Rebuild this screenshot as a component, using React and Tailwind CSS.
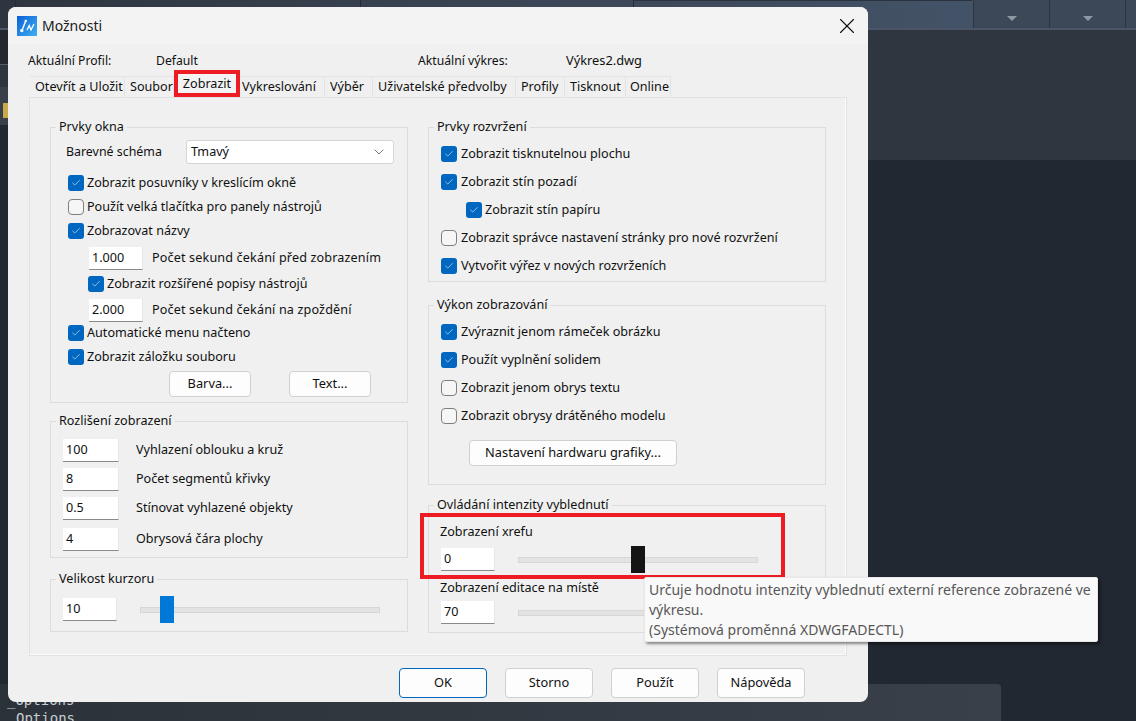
import { X, ChevronDown, Check } from 'lucide-react';

const uiFont = { fontFamily: '"Noto Sans", sans-serif' };

const Group = ({ title, className, children }) => (
    <fieldset className={`border border-[#dcdcdc] ${className}`}>
        <legend className="ml-[5px] px-[3px] h-[18px] leading-[18px] text-[12.6px] text-[#101010]">{title}</legend>
        {children}
    </fieldset>
);

const CheckRow = ({ checked, label, className = '', gap = 'ml-[3px]' }) => (
    <div className={`flex items-center h-[24px] ${className}`}>
        {checked ? (
            <span className="w-[16px] h-[16px] rounded-[3px] bg-[#0067c0] flex items-center justify-center shrink-0">
                <Check size={10} strokeWidth={1.4} color="#fff" />
            </span>
        ) : (
            <span className="w-[16px] h-[16px] rounded-[4px] border border-[#7f7f7f] bg-[#f6f6f6] shrink-0" />
        )}
        <span className={`text-[12.6px] text-[#101010] whitespace-nowrap ${gap}`}>{label}</span>
    </div>
);

const Field = ({ value, className = 'w-[56px]' }) => (
    <div className={`h-[23px] bg-white border-b border-[#8a8a8a] border-r-[#e6e6e6] border-r pl-[3px] text-[12.6px] leading-[21px] text-[#101010] shrink-0 ${className}`}>
        {value}
    </div>
);

const FieldRow = ({ value, label, fieldClass, labelClass, className = '' }) => (
    <div className={`flex items-center ${className}`}>
        <Field value={value} className={fieldClass} />
        <span className={`text-[12.6px] text-[#101010] whitespace-nowrap ${labelClass}`}>{label}</span>
    </div>
);

const Btn = ({ label, className = '', primary }) => (
    <div className={`flex items-center justify-center rounded-[4px] border bg-[#fdfdfd] text-[12.8px] text-[#101010] ${primary ? 'border-[#0067c0]' : 'border-[#d0d0d0]'} ${className}`}>
        {label}
    </div>
);

const Slider = ({ thumbLeft, thumbColor }) => (
    <div className="relative w-[240px] h-[6px] bg-[#e3e3e3] border border-[#d6d6d6]">
        <div className={`absolute top-[-12px] w-[14px] h-[27px] ${thumbLeft} ${thumbColor}`} />
    </div>
);

const tabs = [
    { label: 'Otevřít a Uložit', w: 'w-[95px] pl-[5px]' },
    { label: 'Soubor', w: 'w-[49px] pl-[5px]' },
    { label: 'Zobrazit', active: true },
    { label: 'Vykreslování', w: 'w-[85px] pl-[2px]' },
    { label: 'Výběr', w: 'w-[48px] pl-[5px]' },
    { label: 'Uživatelské předvolby', w: 'w-[143px] pl-[5px]' },
    { label: 'Profily', w: 'w-[49px] pl-[5px]' },
    { label: 'Tisknout', w: 'w-[61px] pl-[5px]' },
    { label: 'Online', w: 'w-[45px] pl-[4px]' },
];

const Tabs = () => (
    <div className="flex items-end h-[21px] ml-[22px] mt-[6px]">
        {tabs.map((t) =>
            t.active ? (
                <div key={t.label} className="w-[66px] h-[27px] border-[4px] border-[#ed1c24] bg-[#f3f3f3] text-[12.6px] leading-[20px] text-center text-[#101010] shrink-0">
                    {t.label}
                </div>
            ) : (
                <div key={t.label} className={`h-[21px] border-t border-r border-[#e3e3e3] text-[12.6px] leading-[20px] text-[#101010] whitespace-nowrap overflow-hidden shrink-0 ${t.w}`}>
                    {t.label}
                </div>
            )
        )}
    </div>
);

const LeftColumn = () => (
    <div className="w-[358px] flex flex-col">
        <Group title="Prvky okna" className="h-[285px]">
            <div className="pl-[17px] pt-[4px]">
                <div className="flex items-center h-[24px] -ml-[2px]">
                    <span className="w-[120px] text-[12.4px] text-[#101010]">Barevné schéma</span>
                    <div className="flex items-center justify-between w-[208px] h-[24px] bg-white border border-[#d6d6d6] rounded-[3px] pl-[4px] pr-[6px] text-[12.6px] text-[#101010]">
                        Tmavý
                        <ChevronDown size={16} strokeWidth={1} color="#333" />
                    </div>
                </div>
                <CheckRow checked label="Zobrazit posuvníky v kreslícím okně" className="mt-[7px]" />
                <CheckRow label="Použít velká tlačítka pro panely nástrojů" />
                <CheckRow checked label="Zobrazovat názvy" />
                <FieldRow value="1.000" label="Počet sekund čekání před zobrazením" fieldClass="w-[54px] ml-[21px]" labelClass="ml-[9px] tracking-[0.15px]" className="mt-[4px]" />
                <CheckRow checked label="Zobrazit rozšířené popisy nástrojů" className="ml-[20px] mt-[2px]" />
                <FieldRow value="2.000" label="Počet sekund čekání na zpoždění" fieldClass="w-[54px] ml-[21px]" labelClass="ml-[9px] tracking-[0.15px]" className="mt-[3px]" />
                <CheckRow checked label="Automatické menu načteno" className="-mt-[1px]" />
                <CheckRow checked label="Zobrazit záložku souboru" />
                <div className="flex mt-[2px] ml-[101px] gap-[38px]">
                    <Btn label="Barva..." className="w-[82px] h-[26px]" />
                    <Btn label="Text..." className="w-[82px] h-[26px]" />
                </div>
            </div>
        </Group>
        <Group title="Rozlišení zobrazení" className="h-[146px] mt-[9px]">
            <div className="pl-[12px] pt-[9px]">
                <FieldRow value="100" label="Vyhlazení oblouku a kruž" fieldClass="w-[56px]" labelClass="ml-[17px]" />
                <FieldRow value="8" label="Počet segmentů křivky" fieldClass="w-[56px]" labelClass="ml-[17px]" className="mt-[6px]" />
                <FieldRow value="0.5" label="Stínovat vyhlazené objekty" fieldClass="w-[56px]" labelClass="ml-[17px]" className="mt-[6px]" />
                <FieldRow value="4" label="Obrysová čára plochy" fieldClass="w-[56px]" labelClass="ml-[17px]" className="mt-[8px]" />
            </div>
        </Group>
        <Group title="Velikost kurzoru" className="h-[62px] mt-[12px]">
            <div className="flex items-center pl-[12px] pt-[10px]">
                <Field value="10" className="w-[54px]" />
                <div className="ml-[23px] mt-[1px]">
                    <Slider thumbLeft="left-[19px]" thumbColor="bg-[#0078d7]" />
                </div>
            </div>
        </Group>
    </div>
);

const RightColumn = () => (
    <div className="w-[398px] flex flex-col">
        <Group title="Prvky rozvržení" className="h-[164px]">
            <div className="pl-[12px] pt-[6px]">
                <CheckRow checked gap="ml-[4px]" label="Zobrazit tisknutelnou plochu" />
                <CheckRow checked gap="ml-[4px]" label="Zobrazit stín pozadí" className="mt-[4px]" />
                <CheckRow checked gap="ml-[3px]" label="Zobrazit stín papíru" className="mt-[4px] ml-[25px]" />
                <CheckRow gap="ml-[4px]" label="Zobrazit správce nastavení stránky pro nové rozvržení" className="mt-[4px]" />
                <CheckRow checked gap="ml-[4px]" label="Vytvořit výřez v nových rozvrženích" className="mt-[4px]" />
            </div>
        </Group>
        <Group title="Výkon zobrazování" className="h-[189px] mt-[14px]">
            <div className="pl-[12px] pt-[6px]">
                <CheckRow checked gap="ml-[4px]" label="Zvýraznit jenom rámeček obrázku" />
                <CheckRow checked gap="ml-[4px]" label="Použít vyplnění solidem" className="mt-[4px]" />
                <CheckRow gap="ml-[4px]" label="Zobrazit jenom obrys textu" className="mt-[4px]" />
                <CheckRow gap="ml-[4px]" label="Zobrazit obrysy drátěného modelu" className="mt-[4px]" />
                <Btn label="Nastavení hardwaru grafiky..." className="w-[208px] h-[26px] mt-[12px] ml-[28px]" />
            </div>
        </Group>
        <Group title="Ovládání intenzity vyblednutí" className="h-[137px] mt-[11px]">
            <div className="pl-[11px] pt-[9px]">
                <div className="text-[12.6px] text-[#101010] h-[18px] leading-[18px]">Zobrazení xrefu</div>
                <div className="flex items-center mt-[7px] ml-[1px]">
                    <Field value="0" className="w-[54px]" />
                    <div className="ml-[23px]">
                        <Slider thumbLeft="left-[112px]" thumbColor="bg-[#141414]" />
                    </div>
                </div>
                <div className="text-[12.6px] text-[#101010] h-[18px] leading-[18px] mt-[8px]">Zobrazení editace na místě</div>
                <div className="flex items-center mt-[4px] ml-[1px]">
                    <Field value="70" className="w-[54px]" />
                    <div className="ml-[23px] w-[240px] h-[6px] bg-[#e3e3e3] border border-[#d6d6d6]" />
                </div>
            </div>
        </Group>
    </div>
);

const AppIcon = () => (
    <svg width="20" height="20" viewBox="0 0 20 20" className="shrink-0">
        <defs>
            <linearGradient id="ic" x1="0" y1="0" x2="1" y2="1">
                <stop offset="0" stopColor="#0a5fd8" />
                <stop offset="1" stopColor="#3fb0f0" />
            </linearGradient>
        </defs>
        <rect width="20" height="20" fill="url(#ic)" />
        <path d="M5 14.5 L8.5 5.5" stroke="#fff" strokeWidth="1.4" fill="none" />
        <circle cx="4.8" cy="14.6" r="1.7" fill="#fff" />
        <circle cx="8.8" cy="5" r="1.3" fill="#fff" />
        <path d="M10 14 L12.2 9.5 L14 14 L17 8" stroke="#fff" strokeWidth="1.3" fill="none" />
    </svg>
);

const Dialog = () => (
    <div className="absolute left-[8px] top-[7px] w-[860px] h-[695px] rounded-[8px] bg-[#f0f0f0] overflow-hidden" style={uiFont}>
        <div className="flex items-center h-[37px] bg-[#f3f3f3] pl-[9px] pr-[8px]">
            <AppIcon />
            <span className="ml-[5px] text-[14px] text-[#1a1a1a] flex-1">Možnosti</span>
            <X size={26} strokeWidth={1} color="#111" />
        </div>
        <div className="flex items-center h-[18px] mt-[8px] pl-[20px] text-[12.2px] text-[#101010]">
            <span className="w-[128px]">Aktuální Profil:</span>
            <span className="w-[262px]">Default</span>
            <span className="w-[148px]">Aktuální výkres:</span>
            <span className="text-[12.8px]">Výkres2.dwg</span>
        </div>
        <Tabs />
        <div className="ml-[21px] w-[818px] h-[559px] border border-[#e2e2e2] shadow-[inset_-1px_-1px_0_#fafafa] flex pl-[20px] pt-[20px] gap-[20px]">
            <LeftColumn />
            <RightColumn />
        </div>
        <div className="flex mt-[12px] ml-[391px] gap-[18px]">
            <Btn primary label="OK" className="w-[88px] h-[30px]" />
            <Btn label="Storno" className="w-[88px] h-[30px]" />
            <Btn label="Použít" className="w-[88px] h-[30px]" />
            <Btn label="Nápověda" className="w-[88px] h-[30px]" />
        </div>
    </div>
);

const Backdrop = () => (
    <div className="flex flex-col h-full">
        <div className="h-[30px] flex bg-gradient-to-r from-[#2e3540] via-[#3c4656] to-[#46586e] border-b-[2px] border-[#4a5668]">
            <div className="w-[16px] border-r border-[#262c35]" />
            <div className="w-[345px] border-r border-[#262c35]" />
            <div className="w-[273px] border-r border-[#262c35]" />
            <div className="flex-1 h-[1px] bg-[#2b3340]" />
            <div className="w-[1px] h-[28px]" />
            <div className="flex">
                {[0, 1].map((i) => (
                    <div key={i} className="w-[76px] h-[28px] bg-[#3c4858] border-l border-[#2c3440] flex items-end justify-center pb-[7px]">
                        <div className="w-0 h-0 border-l-[5px] border-r-[5px] border-t-[5px] border-l-transparent border-r-transparent border-t-[#8f97a3]" />
                    </div>
                ))}
                <div className="w-[11px] h-[28px] bg-[#3c4858] border-l border-[#2c3440]" />
            </div>
        </div>
        <div className="flex flex-1">
            <div className="w-[8px] flex flex-col">
                <div className="h-[35px] bg-[#23282f] border-b border-[#565c64]" />
                <div className="h-[22px] bg-[#2f353e]" />
                <div className="h-[38px] bg-[#3a404a] pl-[3px] pt-[16px]">
                    <div className="w-[5px] h-[15px] bg-[#c9a94a]" />
                </div>
                <div className="flex-1 bg-[#222831]" />
            </div>
            <div className="flex-1 flex flex-col">
                <div className="h-[130px] bg-[#30363f]" />
                <div className="flex-1 bg-[#222831]" />
            </div>
        </div>
        <div className="h-[37px] w-[1001px] rounded-tr-[4px] bg-gradient-to-r from-[#2c3239] to-[#3a4049] pl-[7px] pt-[7px] text-[14px] leading-[18px] text-[#c8ccd2]" style={{ fontFamily: '"DejaVu Sans Mono", monospace' }}>
            <div>_Options</div>
            <div className="pl-[9px]">Options</div>
        </div>
    </div>
);

export default function App() {
    return (
        <div className="relative w-[1136px] h-[721px] overflow-hidden bg-[#222831]">
            <Backdrop />
            <Dialog />
            <div className="absolute left-[420px] top-[513px] w-[365px] h-[66px] border-[4px] border-[#ed1c24]" />
            <div className="absolute left-[644px] top-[577px] w-[454px] h-[65px] bg-[#f9f9f9] border border-[#e8e8e8] rounded-[2px] shadow-[2px_2px_3px_rgba(0,0,0,0.45)] pl-[4px] pt-[2px] text-[14px] leading-[20px] text-[#575757]" style={uiFont}>
                Určuje hodnotu intenzity vyblednutí externí reference zobrazené ve
                <br />
                výkresu.
                <br />
                (Systémová proměnná XDWGFADECTL)
            </div>
        </div>
    );
}
